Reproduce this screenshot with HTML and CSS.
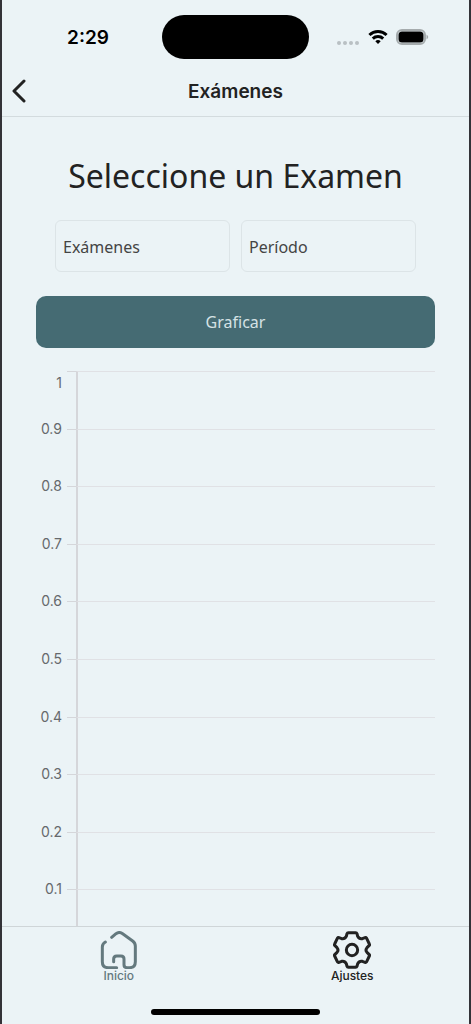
FILE: index.html
```
<!DOCTYPE html>
<html lang="es">
<head>
    <meta charset="UTF-8">
    <meta name="viewport" content="width=device-width, initial-scale=1.0">
    <title>Exámenes</title>
    <link rel="stylesheet" href="styles.css">
</head>
<body>
    <div class="status-bar">
        <span class="time">2:29</span>
        <div class="island"></div>
        <div class="status-icons">
            <svg width="24" height="6" viewBox="0 0 24 6" fill="#b9c0c3">
                <circle cx="3" cy="3" r="2"/>
                <circle cx="9" cy="3" r="2"/>
                <circle cx="15" cy="3" r="2"/>
                <circle cx="21" cy="3" r="2"/>
            </svg>
            <svg class="wifi" width="20" height="16" viewBox="0 0 20 16" fill="none" stroke="#000" stroke-width="3">
                <path d="M1.4 6 A12.4 12.4 0 0 1 18.6 6"/>
                <path d="M4.8 9.6 A7.6 7.6 0 0 1 15.2 9.6"/>
                <path d="M10 15 L7.3 12.3 A4 4 0 0 1 12.7 12.3 Z" fill="#000" stroke="none"/>
            </svg>
            <svg class="battery" width="33" height="16" viewBox="0 0 33 16">
                <rect x="1" y="1" width="28" height="14" rx="5" fill="none" stroke="#a5abad" stroke-width="2"/>
                <rect x="2.5" y="2.5" width="25" height="11" rx="3.5"/>
                <path d="M30.5 5.5 Q34 8 30.5 10.5 Z" fill="#a5abad"/>
            </svg>
        </div>
    </div>

    <header class="header">
        <button class="back" aria-label="Volver">
            <svg width="14" height="24" viewBox="0 0 14 24" fill="none" stroke="#222" stroke-width="3" stroke-linecap="round" stroke-linejoin="round">
                <path d="M12 2 L2 12 L12 22"/>
            </svg>
        </button>
        <h1>Exámenes</h1>
    </header>

    <main>
        <h2>Seleccione un Examen</h2>

        <div class="fields">
            <select aria-label="Exámenes">
                <option>Exámenes</option>
            </select>
            <select aria-label="Período">
                <option>Período</option>
            </select>
        </div>

        <button class="plot-button">Graficar</button>

        <div class="chart">
            <div class="row"><span>1</span></div>
            <div class="row"><span>0.9</span></div>
            <div class="row"><span>0.8</span></div>
            <div class="row"><span>0.7</span></div>
            <div class="row"><span>0.6</span></div>
            <div class="row"><span>0.5</span></div>
            <div class="row"><span>0.4</span></div>
            <div class="row"><span>0.3</span></div>
            <div class="row"><span>0.2</span></div>
            <div class="row"><span>0.1</span></div>
        </div>
    </main>

    <nav class="tabs">
        <a href="#inicio" class="active">
            <svg width="38" height="38" viewBox="59 46 114 114" fill="none" stroke="currentColor" stroke-width="9" stroke-linecap="round" stroke-linejoin="round">
                <path d="M94 65 L107 54 Q117 47 127 54 L157 76 Q165 82 165 91 V138 Q165 156 147 156 H141 Q131 156 131 147 V130 Q131 121 122 121 H109 Q100 121 100 130 V138"/>
                <path d="M75 79 Q66 84 66 94 V138 Q66 156 84 156 H109"/>
            </svg>
            Inicio
        </a>
        <a href="#ajustes">
            <svg width="38" height="38" viewBox="70 47 114 114" fill="none" stroke="currentColor" stroke-width="9" stroke-linecap="round" stroke-linejoin="round">
                <path d="M116 52 H138 Q141 52 142 55 L144 63 Q149 72 158 70 L166 67 Q169 66 171 69 L179 86 Q181 89 178 91 L172 97 Q166 104 172 111 L178 117 Q181 119 179 122 L171 139 Q169 142 166 141 L158 138 Q149 136 144 145 L142 153 Q141 156 138 156 H116 Q113 156 112 153 L110 145 Q105 136 96 138 L88 141 Q85 142 83 139 L75 122 Q73 119 76 117 L82 111 Q88 104 82 97 L76 91 Q73 89 75 86 L83 69 Q85 66 88 67 L96 70 Q105 72 110 63 L112 55 Q113 52 116 52 Z"/>
                <circle cx="127" cy="104" r="17"/>
            </svg>
            Ajustes
        </a>
    </nav>
    <div class="home-indicator"></div>
</body>
</html>
```

FILE: styles.css
```
* {
    box-sizing: border-box;
}

body {
    margin: 0;
    height: 100vh;
    display: flex;
    flex-direction: column;
    background-color: #ebf3f6;
    border-left: 2px solid #333237;
    border-right: 2px solid #333237;
    font-family: Inter, "Liberation Sans", sans-serif;
    color: #222;
}

h1, h2 {
    margin: 0;
}

button {
    border: none;
    cursor: pointer;
}

.status-bar {
    display: grid;
    grid-template-columns: 1fr 147px 1fr;
    align-items: center;
    padding: 15px 0 7px;
}

.time {
    padding-left: 12px;
    text-align: center;
    font-size: 19px;
    font-weight: 600;
    color: #000;
}

.island {
    height: 44px;
    border-radius: 22px;
    background-color: #000;
}

.status-icons {
    display: flex;
    align-items: center;
    gap: 8px;
    padding-left: 27px;
}

.status-icons svg:first-child {
    margin-top: 11px;
}

.header {
    display: grid;
    grid-template-columns: 40px 1fr 40px;
    align-items: center;
    height: 51px;
    border-bottom: 1px solid #d3dbde;
}

.header h1 {
    font-size: 19px;
    font-weight: 600;
    text-align: center;
}

.back {
    display: flex;
    padding: 0 10px;
    background: none;
}

main {
    flex: 1;
    min-height: 0;
    overflow: hidden;
    padding: 34px 34px 0;
}

h2 {
    font-family: "Noto Sans", sans-serif;
    font-size: 32px;
    font-weight: 400;
    line-height: 50px;
    text-align: center;
    white-space: nowrap;
}

.fields {
    display: grid;
    grid-template-columns: 1fr 1fr;
    gap: 11px;
    margin: 19px 19px 24px;
}

.fields select {
    appearance: none;
    height: 52px;
    padding: 1px 7px 0;
    border: 1px solid #dce4e7;
    border-radius: 6px;
    background: none;
    font-family: "Noto Sans", sans-serif;
    font-size: 16px;
    color: #444;
}

.plot-button {
    display: block;
    width: 100%;
    height: 52px;
    border-radius: 10px;
    background-color: #456b73;
    color: #d5e2e5;
    font-family: "Noto Sans", sans-serif;
    font-size: 16px;
}

/* one row per 0.1 step, the axis line is drawn by the left border */
.chart {
    display: grid;
    grid-template-rows: repeat(10, 1fr);
    height: 576px;
    margin-top: 23px;
}

.row {
    display: grid;
    grid-template-columns: 26px 9px 1fr;
    column-gap: 5px;
}

.row::before,
.row::after {
    content: "";
    border-top: 1px solid #d5d6da;
}

.row::before {
    order: 1;
}

.row::after {
    order: 2;
    margin-left: -5px;
    border-top: 1px solid #e0e1e5;
    border-left: 2px solid #d5d6da;
}

.row span {
    margin-top: -10px;
    font-size: 14px;
    line-height: 20px;
    text-align: right;
    color: #66696c;
}

.row:first-child span {
    margin-top: 2px;
}

.tabs {
    display: grid;
    grid-template-columns: 1fr 1fr;
    padding-top: 4px;
    border-top: 1px solid #cfd5d8;
}

.tabs a {
    display: flex;
    flex-direction: column;
    align-items: center;
    font-size: 12px;
    font-weight: 500;
    line-height: 14px;
    color: #222;
    text-decoration: none;
}

.tabs .active {
    color: #64797e;
}

.home-indicator {
    width: 36%;
    height: 6px;
    margin: 26px auto 9px;
    border-radius: 3px;
    background-color: #000;
}
```
